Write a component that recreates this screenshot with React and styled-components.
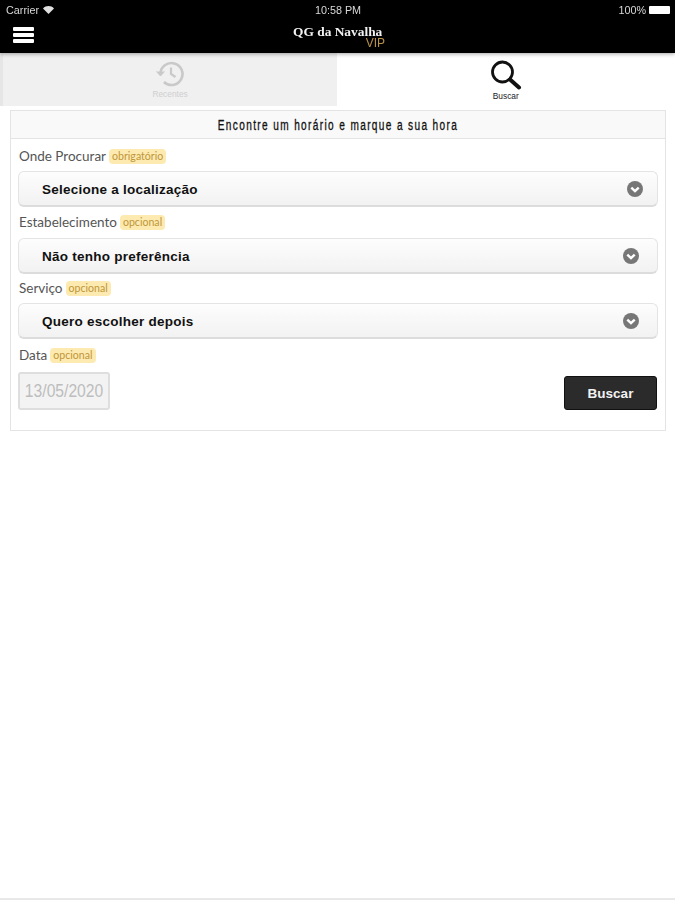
import React from "react";
import styled, { createGlobalStyle } from "styled-components";

const Global = createGlobalStyle`
  html, body { margin: 0; padding: 0; background: #fff; }
  #root { width: 675px; height: 900px; overflow: hidden; }
  * { box-sizing: border-box; }
`;

const Page = styled.div`
  width: 675px;
  height: 900px;
  display: flex;
  flex-direction: column;
  background: #fff;
  font-family: "Liberation Sans", Arial, sans-serif;
  border-bottom: 2px solid #e8e8e8;
  filter: blur(0.45px);
`;

const TopBar = styled.header`
  height: 53px;
  flex: none;
  background: #000;
  color: #fff;
  display: flex;
  flex-direction: column;
  box-shadow: 0 1px 4px rgba(0, 0, 0, 0.35);
  position: relative;
  z-index: 1;
`;

const StatusBar = styled.div`
  height: 19px;
  padding: 1px 5px 0 6px;
  display: grid;
  grid-template-columns: 1fr auto 1fr;
  align-items: center;
  font-size: 10.8px;
  color: #d8d8d8;
`;

const Carrier = styled.div`
  display: flex;
  align-items: center;
  gap: 4px;
`;

const Battery = styled.div`
  justify-self: end;
  display: flex;
  align-items: center;
  gap: 3px;
`;

const BatteryBody = styled.span`
  width: 21px;
  height: 8px;
  background: #fff;
  border-radius: 1px;
`;

const NavRow = styled.div`
  flex: 1;
  padding: 0 13px;
  display: flex;
  align-items: flex-start;
  position: relative;
`;

const Burger = styled.div`
  width: 21px;
  display: flex;
  flex-direction: column;
  gap: 2px;
  margin-top: 8px;
`;

const BurgerBar = styled.span`
  height: 4px;
  background: #fff;
  border-radius: 1px;
`;

const Logo = styled.div`
  position: absolute;
  left: 293px;
  top: 6px;
  width: 92px;
  font-family: "Liberation Serif", serif;
  font-weight: 700;
  font-size: 13.4px;
  line-height: 13px;
  white-space: nowrap;
  color: #f2f2f2;
`;

const LogoVip = styled.div`
  font-family: "Liberation Sans", sans-serif;
  font-weight: 400;
  font-size: 12px;
  line-height: 10px;
  text-align: right;
  color: #b8914a;
`;

const Tabs = styled.nav`
  height: 53px;
  flex: none;
  display: grid;
  grid-template-columns: 337px 338px;
`;

const Tab = styled.div`
  background: ${(p) => (p.$active ? "#fff" : "#f0f0f0")};
  color: ${(p) => (p.$active ? "#222" : "#cfcfcf")};
  border-left: ${(p) => (p.$active ? "none" : "3px solid #e6e6e6")};
  padding-top: 7px;
  display: flex;
  flex-direction: column;
  align-items: center;
  font-size: 9.5px;
  svg { display: block; }
`;

const TabLabel = styled.span`
  margin-top: 0;
  line-height: 11px;
  display: inline-block;
  transform: scaleX(0.88);
`;

const Panel = styled.section`
  margin: 4px 9px 0 10px;
  height: 321px;
  border: 1px solid #e4e4e4;
  display: flex;
  flex-direction: column;
`;

const PanelTitle = styled.h2`
  margin: 0;
  height: 28px;
  flex: none;
  background: #f9f9f9;
  border-bottom: 1px solid #e4e4e4;
  display: flex;
  align-items: center;
  justify-content: center;
  font-family: "Liberation Sans", sans-serif;
  font-weight: 400;
  font-size: 14px;
  color: #111;
  span {
    display: inline-block;
    white-space: nowrap;
    transform: scaleX(0.72);
    letter-spacing: 1.9px;
    -webkit-text-stroke: 0.3px #111;
  }
`;

const Form = styled.div`
  padding: 9px 7px 0 7px;
  display: flex;
  flex-direction: column;
`;

const Field = styled.div`
  display: flex;
  flex-direction: column;
`;

const LabelRow = styled.div`
  height: 17px;
  margin-bottom: ${(p) => p.$gap}px;
  display: flex;
  align-items: center;
  padding-left: 1px;
  gap: 3px;
  font-family: "Lato", sans-serif;
  font-size: 13.5px;
  line-height: 15px;
  color: #555;
`;

const Tag = styled.span`
  background: #fdeab0;
  border-radius: 4px;
  padding: 0 3px;
  height: 15px;
  line-height: 15px;
  font-family: "Lato", sans-serif;
  font-size: 10.6px;
  color: #c0963a;
`;

const Select = styled.div`
  height: 36px;
  margin-bottom: ${(p) => p.$gap}px;
  border: 1px solid #e4e4e4;
  border-bottom: 2px solid #dcdcdc;
  border-radius: 6px;
  background: linear-gradient(#fdfdfd, #f2f2f2);
  padding: 1px ${(p) => p.$right}px 0 23px;
  display: flex;
  align-items: center;
  justify-content: space-between;
  font-weight: 700;
  font-size: 13.5px;
  letter-spacing: 0.25px;
  color: #111;
`;

const BottomRow = styled.div`
  display: flex;
  justify-content: space-between;
  align-items: flex-end;
`;

const DateBox = styled.div`
  width: 92px;
  height: 38px;
  border: 2px solid #dedede;
  border-radius: 3px;
  background: #f3f3f3;
  display: flex;
  align-items: center;
  justify-content: center;
  font-size: 18px;
  color: #bdbdbd;
  span {
    display: inline-block;
    transform: scaleX(0.87);
    white-space: nowrap;
  }
`;

const SearchButton = styled.button`
  width: 93px;
  height: 34px;
  border: 1px solid #111;
  border-radius: 3px;
  background: #2b2b2b;
  color: #f2f2f2;
  font-family: "Liberation Sans", sans-serif;
  font-weight: 700;
  font-size: 13.5px;
  margin-right: 1px;
  padding: 0;
`;

const Wifi = () => (
  <svg width="11" height="8" viewBox="0 0 11 8">
    <path d="M0 2.4C3-.7 8-.7 11 2.4L5.5 8z" fill="#e0e0e0" />
  </svg>
);

const Chevron = () => (
  <svg width="16" height="16" viewBox="0 0 16 16">
    <circle cx="8" cy="8" r="8" fill="#777" />
    <path d="M4.3 6.6 8 10.2l3.7-3.6" fill="none" stroke="#fff" strokeWidth="2.4" />
  </svg>
);

const HistoryIcon = () => (
  <svg width="30" height="28" viewBox="0 0 30 28" fill="none" stroke="#c9c9c9" strokeWidth="2.6">
    <path d="M5.5 14a11 11 0 1 1 3.4 8" />
    <path d="M1.5 11.5 5.5 16l4-4.5" fill="#c9c9c9" strokeWidth="1" />
    <path d="M16 7.5V14l4.5 3" strokeWidth="2.2" />
  </svg>
);

const SearchIcon = () => (
  <svg width="32" height="30" viewBox="0 0 32 30" fill="none" stroke="#111" strokeLinecap="round">
    <circle cx="12.5" cy="12" r="10" strokeWidth="2.8" />
    <path d="M20 19.5 29 27.5" strokeWidth="4" />
  </svg>
);

const fields = [
  { label: "Onde Procurar", tag: "obrigatório", value: "Selecione a localização", right: 14, labelGap: 6, gap: 7 },
  { label: "Estabelecimento", tag: "opcional", value: "Não tenho preferência", right: 18, labelGap: 7, gap: 6 },
  { label: "Serviço", tag: "opcional", value: "Quero escolher depois", right: 18, labelGap: 6, gap: 8 },
];

export default function App() {
  return (
    <Page>
      <Global />
      <TopBar>
        <StatusBar>
          <Carrier>Carrier <Wifi /></Carrier>
          <span>10:58 PM</span>
          <Battery>100% <BatteryBody /></Battery>
        </StatusBar>
        <NavRow>
          <Burger><BurgerBar /><BurgerBar /><BurgerBar /></Burger>
          <Logo>
            QG da Navalha
            <LogoVip>VIP</LogoVip>
          </Logo>
        </NavRow>
      </TopBar>
      <Tabs>
        <Tab>
          <HistoryIcon />
          <TabLabel>Recentes</TabLabel>
        </Tab>
        <Tab $active>
          <SearchIcon />
          <TabLabel>Buscar</TabLabel>
        </Tab>
      </Tabs>
      <Panel>
        <PanelTitle><span>Encontre um horário e marque a sua hora</span></PanelTitle>
        <Form>
          {fields.map((f) => (
            <Field key={f.label}>
              <LabelRow $gap={f.labelGap}>{f.label} <Tag>{f.tag}</Tag></LabelRow>
              <Select $gap={f.gap} $right={f.right}>
                {f.value}
                <Chevron />
              </Select>
            </Field>
          ))}
          <LabelRow $gap={8}>Data <Tag>opcional</Tag></LabelRow>
          <BottomRow>
            <DateBox><span>13/05/2020</span></DateBox>
            <SearchButton>Buscar</SearchButton>
          </BottomRow>
        </Form>
      </Panel>
    </Page>
  );
}
